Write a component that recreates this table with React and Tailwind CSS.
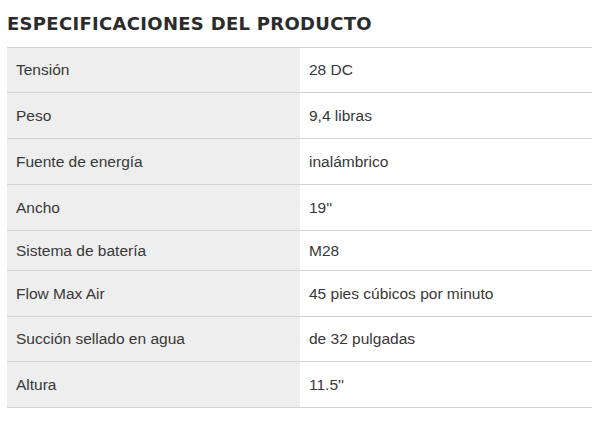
export default function App() {
  const rows = [
    ["Tensión", "28 DC", "h-[45px]"],
    ["Peso", "9,4 libras", "h-[46px]"],
    ["Fuente de energía", "inalámbrico", "h-[46px]"],
    ["Ancho", "19''", "h-[46px]"],
    ["Sistema de batería", "M28", "h-[40px]"],
    ["Flow Max Air", "45 pies cúbicos por minuto", "h-[46px]"],
    ["Succión sellado en agua", "de 32 pulgadas", "h-[45px]"],
    ["Altura", "11.5''", "h-[46px]"],
  ];
  return (
    <div className="w-[599px] h-[424px] bg-white pl-[7px] pr-[7px] pt-[13px] font-['Liberation_Sans',Arial,sans-serif]">
      <h2 className="text-[18px] leading-[21px] font-bold text-[#2b2b2b] tracking-[0.3px] font-['DejaVu_Sans',sans-serif] h-[34px]">
        ESPECIFICACIONES DEL PRODUCTO
      </h2>
      <div className="border-t border-[#d4d4d4]">
        {rows.map(([k, v, h]) => (
          <div key={k} className={`flex border-b border-[#d4d4d4] ${h}`}>
            <div className="w-[293px] bg-[#eeeeee] pl-[9px] flex items-center text-[15.5px] text-[#383838]">
              {k}
            </div>
            <div className="flex-1 pl-[9px] flex items-center text-[15.5px] text-[#383838]">
              {v}
            </div>
          </div>
        ))}
      </div>
    </div>
  );
}
